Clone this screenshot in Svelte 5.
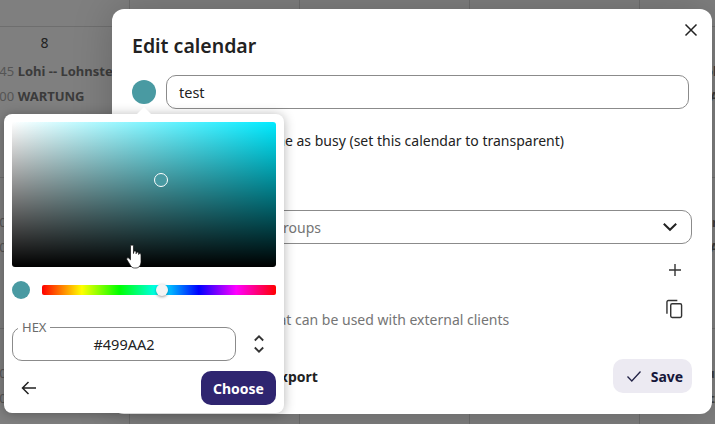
<script>
  const rows = [
    [{ d: '8', e: [['10:45', 'Lohi -- Lohnsteuer'], ['11:00', 'WARTUNG']] }, {}, {}, {}, { e: [['10:45', 'Lohi -- Lohnsteuer'], ['11:00', 'WARTUNG']] }],
    [{ e: [['09:00', 'Termin'], ['11:00', 'WARTUNG']] }, {}, {}, {}, { e: [['09:00', 'Termin'], ['11:00', 'WARTUNG']] }],
    [{ e: [['10:00', 'Termin'], ['11:00', 'WARTUNG']] }, {}, {}, {}, { e: [['10:00', 'Runde'], ['11:00', 'Sitzung']] }]
  ];
</script>

<div class="page">
  <div class="calendar">
    <div class="head"></div>
    {#each rows as row}
      <div class="week">
        {#each row as cell}
          <div class="cell">
            <div class="day">{cell.d ?? ''}</div>
            {#each cell.e ?? [] as ev}
              <div class="event"><span class="time">{ev[0]}</span> <b>{ev[1]}</b></div>
            {/each}
          </div>
        {/each}
      </div>
    {/each}
  </div>
  <div class="backdrop"></div>

  <section class="dialog">
    <button class="close" aria-label="Close">
      <svg width="16" height="16" viewBox="0 0 16 16"><path d="M2.500 2.500l11 11M13.500 2.500l-11 11" stroke="#222" stroke-width="1.500" fill="none"/></svg>
    </button>
    <h2>Edit calendar</h2>
    <div class="name-row">
      <span class="swatch"></span>
      <div class="field name">test</div>
    </div>
    <div class="busy">Never show me as busy (set this calendar to transparent)</div>
    <div class="field select">
      <span>Share with users or groups</span>
      <svg width="16" height="16" viewBox="0 0 16 16"><path d="M1.800 4.800L8 10.800l6.200-6" stroke="#222" stroke-width="2" fill="none"/></svg>
    </div>
    <div class="action-row plus">
      <span class="label">Internal link</span>
      <svg width="14" height="14" viewBox="0 0 14 14"><path d="M7 1v12M1 7h12" stroke="#333" stroke-width="1.400" fill="none"/></svg>
    </div>
    <div class="action-row copy">
      <span class="muted">Calendar link that can be used with external clients</span>
      <svg width="17" height="20" viewBox="0 0 18 21"><path d="M1 15.500V3a1.500 1.500 0 0 1 1.500-1.500H12" stroke="#333" stroke-width="1.500" fill="none"/><rect x="5" y="5" width="11.500" height="14.500" rx="1.500" stroke="#333" stroke-width="1.500" fill="none"/></svg>
    </div>
    <div class="footer">
      <b class="export">Export</b>
      <button class="save">
        <svg width="16" height="14" viewBox="0 0 16 14"><path d="M1.500 7.500l4.300 4.500L14.500 2.500" stroke="#222246" stroke-width="1.300" fill="none"/></svg>
        Save
      </button>
    </div>
  </section>

  <div class="popover">
    <span class="arrow"></span>
    <div class="sv"><span class="sv-thumb"></span></div>
    <div class="hue-row">
      <span class="mini"></span>
      <div class="hue"><span class="hue-thumb"></span></div>
    </div>
    <div class="hex-row">
      <div class="field hex">
        <span class="legend">HEX</span>
        #499AA2
      </div>
      <svg width="10" height="18" viewBox="0 0 10 18"><path d="M.8 5.500L5 1.300l4.200 4.200M.8 12.500L5 16.700l4.200-4.200" stroke="#333" stroke-width="1.800" fill="none"/></svg>
    </div>
    <div class="pop-foot">
      <svg class="back" width="16" height="14" viewBox="0 0 16 14"><path d="M15 7H2M7.500 1L1.500 7l6 6" stroke="#222" stroke-width="1.500" fill="none"/></svg>
      <button class="choose">Choose</button>
    </div>
    <svg class="hand" width="17" height="25" viewBox="0 0 17 25"><path d="M4.500 2c0-1.400 3-1.400 3 0v7.500l.4-2c1-.8 2.100-.4 2.200.5v1.800l.3-1.300c1-.7 2.100-.3 2.200.7v1.300l.3-.7c.9-.6 2-.1 2.100.9v7c0 3.200-1.700 6.300-5 6.300H8.500c-1.900 0-3.100-1-4-2.500L.8 15.500c-.4-1.100.8-2.100 1.900-1.400l1.800 1.700z" fill="#fff" stroke="#111" stroke-width=".7"/></svg>
  </div>
</div>

<style>
  :global(body) {
    margin: 0;
    overflow: hidden;
  }
  .page {
    position: relative;
    width: 715px;
    height: 424px;
    overflow: hidden;
    font-family: "Noto Sans", "Open Sans", sans-serif;
    font-size: 14px;
    color: #222;
    background: #fff;
  }
  .calendar {
    margin-left: -40px;
    width: 850px;
  }
  .head {
    height: 26px;
    border-bottom: 1px solid #ddd;
    background-image: linear-gradient(to right, transparent 169px, #ddd 169px);
    background-size: 170px 100%;
  }
  .week {
    display: grid;
    grid-template-columns: repeat(5, 170px);
    height: 150px;
    border-bottom: 1px solid #ddd;
  }
  .cell {
    border-right: 1px solid #ddd;
    padding-left: 21px;
    overflow: hidden;
    white-space: nowrap;
    font-size: 13px;
    color: #777;
  }
  .day {
    height: 26px;
    padding-top: 6px;
    margin-left: -21px;
    text-align: center;
    font-size: 14px;
    line-height: 20px;
    color: #444;
  }
  .event {
    height: 25px;
    line-height: 25px;
  }
  .time {
    color: #aaa;
  }
  .backdrop {
    position: absolute;
    inset: 0;
    background: rgba(0, 0, 0, 0.5);
  }
  .dialog {
    position: absolute;
    left: 112px;
    top: 9px;
    width: 600px;
    height: 405px;
    box-sizing: border-box;
    padding: 21px 20px 0;
    background: #fff;
    border-radius: 12px;
    box-shadow: 0 0 40px rgba(0, 0, 0, 0.2);
    display: flex;
    flex-direction: column;
  }
  h2 {
    margin: 0;
    font-size: 19.500px;
    line-height: 32px;
    font-weight: 600;
    color: #222;
  }
  .close {
    position: absolute;
    right: 13px;
    top: 13px;
    width: 16px;
    height: 16px;
    padding: 0;
    border: 0;
    background: none;
    display: flex;
  }
  .name-row {
    display: flex;
    align-items: center;
    gap: 10px;
    margin-top: 13px;
    padding-right: 3px;
  }
  .swatch {
    width: 24px;
    height: 24px;
    border-radius: 50%;
    background: #499aa2;
    flex: none;
  }
  .field {
    box-sizing: border-box;
    height: 34px;
    border: 1px solid #8b8b8b;
    border-radius: 10px;
    line-height: 32px;
    font-size: 14.500px;
  }
  .name {
    flex: 1;
    padding-left: 12px;
  }
  .busy {
    margin-top: 21px;
    margin-left: 59px;
    line-height: 22px;
    height: 22px;
    font-size: 14px;
  }
  .select {
    margin-top: 58px;
    display: flex;
    justify-content: space-between;
    align-items: center;
    padding: 0 13px 0 11px;
    color: #757575;
    font-size: 14px;
  }
  .select span {
    margin-top: 2px;
  }
  .action-row {
    display: flex;
    justify-content: space-between;
    align-items: center;
  }
  .plus {
    margin-top: 15px;
    height: 22px;
    padding-right: 10px;
  }
  .copy {
    margin-top: 14px;
    height: 40px;
    padding-right: 9px;
    align-items: flex-start;
    padding-top: 4px;
    box-sizing: border-box;
  }
  .muted {
    color: #757575;
    margin-top: 11px;
    margin-left: 43px;
    font-size: 14px;
  }
  .footer {
    margin-top: 24px;
    display: flex;
    justify-content: space-between;
    align-items: center;
  }
  .export {
    font-size: 14px;
    font-weight: 700;
    margin-left: 140px;
    color: #222;
  }
  .save {
    width: 79px;
    height: 34px;
    border: 0;
    border-radius: 10px;
    background: #eceaf2;
    font: 700 14px "Noto Sans", sans-serif;
    color: #16163a;
    display: flex;
    align-items: center;
    justify-content: center;
    gap: 9px;
    padding: 0 0 0 4px;
  }
  .popover {
    position: absolute;
    left: 4px;
    top: 114px;
    width: 280px;
    height: 299px;
    box-sizing: border-box;
    padding: 8px;
    background: #fff;
    border-radius: 8px;
    box-shadow: 0 1px 12px rgba(0, 0, 0, 0.3);
  }
  .arrow {
    position: absolute;
    left: 133px;
    top: -7px;
    width: 0;
    height: 0;
    border: 7px solid transparent;
    border-top: 0;
    border-bottom-color: #fff;
  }
  .sv {
    position: relative;
    height: 145px;
    border-radius: 3px;
    background: linear-gradient(to top, #000, transparent), linear-gradient(to right, #fff, #00eaff);
  }
  .sv-thumb {
    position: absolute;
    left: 142px;
    top: 51px;
    width: 14px;
    height: 14px;
    box-sizing: border-box;
    border: 1.500px solid #fff;
    border-radius: 50%;
    background: #499aa2;
  }
  .hue-row {
    display: flex;
    align-items: center;
    gap: 12px;
    margin-top: 14px;
  }
  .mini {
    width: 18px;
    height: 18px;
    border-radius: 50%;
    background: #499aa2;
    flex: none;
  }
  .hue {
    position: relative;
    flex: 1;
    height: 10px;
    border-radius: 2px;
    background: linear-gradient(to right, #f00, #ff0 17%, #0f0 33%, #0ff 50%, #00f 67%, #f0f 83%, #f00);
  }
  .hue-thumb {
    position: absolute;
    left: 114px;
    top: -1px;
    width: 12px;
    height: 12px;
    border-radius: 50%;
    background: #f4f4f4;
    box-shadow: 0 1px 3px rgba(0, 0, 0, 0.4);
  }
  .hex-row {
    display: flex;
    align-items: center;
    gap: 18px;
    margin-top: 28px;
  }
  .hex {
    position: relative;
    width: 224px;
    text-align: center;
    flex: none;
    font-size: 14.500px;
  }
  .legend {
    position: absolute;
    left: 5px;
    top: -8px;
    padding: 0 4px;
    background: #fff;
    color: #6b6b6b;
    font-size: 13px;
    line-height: 14px;
  }
  .pop-foot {
    display: flex;
    justify-content: space-between;
    align-items: center;
    margin-top: 10px;
  }
  .back {
    margin-left: 9px;
  }
  .choose {
    width: 75px;
    height: 34px;
    border: 0;
    border-radius: 10px;
    background: #2f2570;
    color: #fff;
    font: 700 14px "Noto Sans", sans-serif;
    padding: 0;
  }
  .hand {
    position: absolute;
    left: 122px;
    top: 130px;
  }
</style>
